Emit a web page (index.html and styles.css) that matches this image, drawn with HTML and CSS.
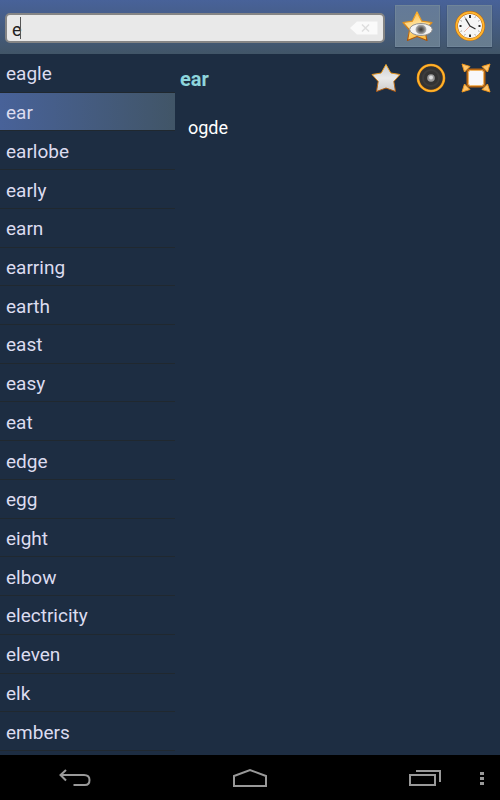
FILE: index.html
```html
<!DOCTYPE html>
<html lang="en">
<head>
    <meta charset="UTF-8">
    <meta name="viewport" content="width=device-width, initial-scale=1.0">
    <title>Dictionary</title>
    <link rel="stylesheet" href="styles.css">
</head>
<body>
    <header class="toolbar">
        <div class="search">
            <input type="text" class="search-input" value="e" aria-label="Search word">
            <span class="caret"></span>
            <button class="clear" aria-label="Clear">
                <svg width="28" height="14" viewBox="0 0 28 14">
                    <path d="M0 7L7 0.500H27.500V13.500H7Z" fill="#fafafa"/>
                    <path d="M12 3.500L19 10.500M19 3.500L12 10.500" stroke="#dedede" stroke-width="1.500"/>
                </svg>
            </button>
        </div>
        <button class="tool" aria-label="Favorites">
            <svg width="32" height="32" viewBox="0 0 32 32">
                <defs>
                    <linearGradient id="gold" x1="0" y1="0" x2="0.400" y2="1">
                        <stop offset="0" stop-color="#ffb22b"/>
                        <stop offset="0.500" stop-color="#ffdf96"/>
                        <stop offset="1" stop-color="#ffc046"/>
                    </linearGradient>
                    <linearGradient id="rim" x1="0" y1="0" x2="0" y2="1">
                        <stop offset="0" stop-color="#ffb126"/>
                        <stop offset="1" stop-color="#a8540c"/>
                    </linearGradient>
                    <radialGradient id="pupil">
                        <stop offset="0" stop-color="#333"/>
                        <stop offset="0.450" stop-color="#666"/>
                        <stop offset="1" stop-color="#b9b9b9"/>
                    </radialGradient>
                </defs>
                <path d="M15 2L19.800 11.200L30 12.500L22.800 20L25 30.500L15 26.500L5.500 30.500L7.500 20L1 12.500L10.300 11.200Z" fill="url(#gold)" stroke="url(#rim)" stroke-width="1.200" stroke-linejoin="round"/>
                <ellipse cx="19" cy="19.500" rx="11.300" ry="6" fill="#f3f3f3" stroke="#909090" stroke-width="1"/>
                <ellipse cx="19" cy="19.500" rx="5.500" ry="5" fill="url(#pupil)"/>
            </svg>
        </button>
        <button class="tool" aria-label="History">
            <svg width="32" height="32" viewBox="0 0 32 32">
                <circle cx="16" cy="16" r="13.500" fill="#f6f6f6" stroke="#bd650b" stroke-width="3"/>
                <circle cx="16" cy="16" r="13.500" fill="none" stroke="#ffb62f" stroke-width="2"/>
                <path d="M16 5V8M16 24.500V27M5.500 16H7.500M24.500 16H26.500" stroke="#333" stroke-width="2"/>
                <path d="M21.500 6.500L20.700 8M25.500 10.500L24 11.300M25.500 21.500L24 20.700M21.500 25.500L20.700 24M10.500 25.500L11.300 24M6.500 21.500L8 20.700M6.500 10.500L8 11.300M10.500 6.500L11.300 8" stroke="#aaa"/>
                <path d="M16 16L10 22" stroke="#f2b8a8" stroke-width="1"/>
                <path d="M11.500 8.500L16 16L21.500 19" fill="none" stroke="#333" stroke-width="1.300"/>
            </svg>
        </button>
    </header>
    <main class="content">
        <ul class="words">
            <li class="word">eagle</li>
            <li class="word selected">ear</li>
            <li class="word">earlobe</li>
            <li class="word">early</li>
            <li class="word">earn</li>
            <li class="word">earring</li>
            <li class="word">earth</li>
            <li class="word">east</li>
            <li class="word">easy</li>
            <li class="word">eat</li>
            <li class="word">edge</li>
            <li class="word">egg</li>
            <li class="word">eight</li>
            <li class="word">elbow</li>
            <li class="word">electricity</li>
            <li class="word">eleven</li>
            <li class="word">elk</li>
            <li class="word">embers</li>
        </ul>
        <section class="entry">
            <div class="entry-head">
                <h1 class="title">ear</h1>
                <div class="actions">
                    <button class="action" aria-label="Add to favorites">
                        <svg width="30" height="30" viewBox="0 0 30 30">
                            <defs>
                                <linearGradient id="silver" x1="0" y1="0" x2="0" y2="1">
                                    <stop offset="0" stop-color="#c9ccd0"/>
                                    <stop offset="0.500" stop-color="#e9e9e9"/>
                                    <stop offset="1" stop-color="#ccc"/>
                                </linearGradient>
                            </defs>
                            <path d="M15 1.500L19.800 10L29 11.500L22.800 18.500L24.500 28.500L15 25L5.500 28.500L7.200 18.500L1 11.500L10.200 10Z" fill="url(#silver)" stroke="url(#rim)" stroke-width="1" stroke-linejoin="round"/>
                        </svg>
                    </button>
                    <button class="action" aria-label="Listen">
                        <svg width="30" height="30" viewBox="0 0 30 30">
                            <circle cx="15" cy="15" r="13" fill="#333" stroke="#e88c12" stroke-width="2.600"/>
                            <circle cx="15" cy="15" r="13" fill="none" stroke="#ffb52e" stroke-width="1.500"/>
                            <circle cx="15" cy="15" r="8" fill="none" stroke="#3d3d3d" stroke-width="2"/>
                            <circle cx="15" cy="15" r="3.800" fill="#999"/>
                            <circle cx="15" cy="14.500" r="2" fill="#ddd"/>
                        </svg>
                    </button>
                    <button class="action" aria-label="Full screen">
                        <svg width="30" height="30" viewBox="0 0 30 30">
                            <path d="M1 1L9 3.500L3.500 9ZM29 1L21 3.500L26.500 9ZM1 29L9 26.500L3.500 21ZM29 29L21 26.500L26.500 21Z" fill="#ffc56a" stroke="#ee961d" stroke-width="1" stroke-linejoin="round"/>
                            <rect x="6.500" y="6.500" width="17" height="17" rx="3" fill="#fff" stroke="#b9660f" stroke-width="2"/>
                            <rect x="7.500" y="7.500" width="15" height="15" rx="2" fill="#f8f8fa" stroke="#f0b768" stroke-width="1"/>
                        </svg>
                    </button>
                </div>
            </div>
            <p class="translation">ogde</p>
        </section>
    </main>
    <nav class="navbar">
        <button class="nav" aria-label="Back">
            <svg width="32" height="18" viewBox="0 0 32 18">
                <path d="M7 1L1.500 6L7 11.500M1.500 6H25Q30.500 6 30.500 11Q30.500 16 26 16H14.500" fill="none" stroke="#999" stroke-width="2"/>
            </svg>
        </button>
        <button class="nav" aria-label="Home">
            <svg width="36" height="20" viewBox="0 0 36 20">
                <path d="M2 18V8L18 2L34 8V18Z" fill="none" stroke="#999" stroke-width="2"/>
            </svg>
        </button>
        <button class="nav" aria-label="Recent apps">
            <svg width="32" height="18" viewBox="0 0 32 18">
                <path d="M1 6H26V16H1ZM7 2H31V13" fill="none" stroke="#999" stroke-width="2"/>
            </svg>
        </button>
        <button class="nav more" aria-label="More">
            <svg width="4" height="14" viewBox="0 0 4 14">
                <path d="M0 0H4V3H0ZM0 5H4V8H0ZM0 10H4V13H0Z" fill="#999"/>
            </svg>
        </button>
    </nav>
</body>
</html>
```
FILE: styles.css
```css
* {
    box-sizing: border-box;
}
body {
    margin: 0;
    height: 100vh;
    display: flex;
    flex-direction: column;
    background-color: #1d2d42;
    color: #dcdcf0;
    font-family: Roboto, sans-serif;
}
button {
    display: flex;
    align-items: center;
    justify-content: center;
    padding: 0;
    border: none;
    background: none;
    cursor: pointer;
}
.toolbar {
    display: flex;
    gap: 7px;
    flex: none;
    height: 54px;
    padding: 5px 8px 6px 5px;
    background: linear-gradient(#486299, #415567);
}
.search {
    position: relative;
    flex: 1;
    margin: 8px 3px 5px 0;
}
.search-input {
    width: 100%;
    height: 30px;
    padding: 2px 40px 0 5px;
    border: 2px solid #858585;
    border-radius: 5px;
    outline: none;
    background-color: #e9e9e9;
    color: #222;
    font-family: Roboto, sans-serif;
    font-size: 18px;
}
/* text cursor after the typed letter */
.caret {
    position: absolute;
    left: 15px;
    top: 4px;
    width: 1px;
    height: 22px;
    background-color: #555;
}
.clear {
    position: absolute;
    right: 7px;
    top: 8px;
}
.tool {
    width: 45px;
    height: 42px;
    border: 1px solid #708599;
    background: linear-gradient(#647a98, #687d8f);
    box-shadow: 0 1px 1px #2f4258;
}
.content {
    display: flex;
    flex: 1;
    min-height: 0;
}
.words {
    display: grid;
    grid-auto-rows: 1fr;
    width: 35%;
    margin: 0;
    padding: 0 0 4px;
    list-style: none;
    font-size: 19px;
}
.word {
    display: flex;
    align-items: center;
    padding: 2px 0 0 6px;
    border-bottom: 1px solid #20282f;
}
.selected {
    background: linear-gradient(to right, #486299, #415567);
}
.entry {
    flex: 1;
    padding: 9px 9px 0 5px;
}
.entry-head {
    display: flex;
    align-items: center;
    justify-content: space-between;
}
.title {
    margin: 0;
    padding-top: 2px;
    color: #8ed5dc;
    font-size: 20px;
    font-weight: bold;
}
.actions {
    display: flex;
    gap: 15px;
}
.translation {
    margin: 24px 8px;
    color: #fff;
    font-size: 18px;
}
.navbar {
    position: relative;
    display: flex;
    justify-content: space-between;
    flex: none;
    height: 45px;
    padding: 0 59px;
    background-color: #000;
}
.more {
    position: absolute;
    right: 16px;
    top: 17px;
}
```
